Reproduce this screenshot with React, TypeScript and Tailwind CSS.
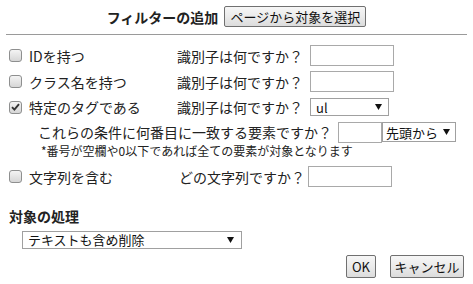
import React from 'react';

const font = { fontFamily: '"Noto Sans CJK JP", "Noto Sans", sans-serif' };

const Check: React.FC<{ checked?: boolean }> = ({ checked }) => (
  <span className="w-[13px] h-[13px] rounded-[3px] border border-[#8e8f8f] bg-gradient-to-b from-[#f4f4f4] to-[#d6d6d6] flex items-center justify-center shrink-0">
    {checked && (
      <svg width="9" height="8" viewBox="0 0 9 8">
        <path d="M1 4.2 L3.4 6.6 L8 1.2" fill="none" stroke="#333" strokeWidth="1.9" />
      </svg>
    )}
  </span>
);

const Arrow = () => (
  <svg width="7" height="6" viewBox="0 0 7 6" className="shrink-0">
    <polygon points="0,0 7,0 3.5,6" fill="#111" />
  </svg>
);

const Input: React.FC<{ w: string }> = ({ w }) => (
  <div className={`${w} h-[21px] border border-[#a9a9a9] bg-white shrink-0`} />
);

const Btn: React.FC<{ label: string; cls: string }> = ({ label, cls }) => (
  <button className={`${cls} border border-[#707070] rounded-[2px] bg-gradient-to-b from-[#f6f6f6] via-[#ebebeb] to-[#dcdcdc] text-[13px] leading-none text-[#111] flex items-center justify-center`}>
    {label}
  </button>
);

export default function App() {
  return (
    <div className="w-[473px] h-[284px] bg-white text-[#222] overflow-hidden" style={font}>
      {/* header */}
      <div className="flex items-center justify-center gap-[6px] pt-[6px] h-[27px]">
        <span className="text-[14px] font-bold leading-none">フィルターの追加</span>
        <Btn label="ページから対象を選択" cls="w-[142px] h-[21px]" />
      </div>
      <div className="mx-[6px] mt-[7px] border-t border-[#9a9a9a]" />

      {/* filters */}
      <div className="mt-[10px] text-[14px] leading-none">
        <div className="flex items-center h-[21px]">
          <div className="w-[177px] pl-[9px] flex items-center gap-[7px]">
            <Check />
            <span>IDを持つ</span>
          </div>
          <span className="w-[133px]">識別子は何ですか？</span>
          <Input w="w-[84px]" />
        </div>

        <div className="flex items-center h-[21px] mt-[5px]">
          <div className="w-[177px] pl-[9px] flex items-center gap-[7px]">
            <Check />
            <span>クラス名を持つ</span>
          </div>
          <span className="w-[133px]">識別子は何ですか？</span>
          <Input w="w-[84px]" />
        </div>

        <div className="flex items-center h-[20px] mt-[5px]">
          <div className="w-[177px] pl-[9px] flex items-center gap-[7px]">
            <Check checked />
            <span>特定のタグである</span>
          </div>
          <span className="w-[133px]">識別子は何ですか？</span>
          <div className="w-[79px] h-[18px] border border-[#a0a0a0] bg-white flex items-center justify-between pl-[5px] pr-[6px] text-[13px] text-[#111]">
            <span>ul</span>
            <Arrow />
          </div>
        </div>

        <div className="flex items-center h-[20px] mt-[5px] pl-[38px]">
          <span className="w-[300px]">これらの条件に何番目に一致する要素ですか？</span>
          <Input w="w-[44px] h-[20px]" />
          <div className="w-[74px] h-[20px] border border-[#a0a0a0] bg-white flex items-center justify-between pl-[3px] pr-[5px] text-[13px] text-[#111]">
            <span>先頭から</span>
            <Arrow />
          </div>
        </div>

        <div className="h-[16px] mt-[1px] pl-[41px] flex items-center text-[12px]">
          *番号が空欄や0以下であれば全ての要素が対象となります
        </div>

        <div className="flex items-center h-[21px] mt-[7px]">
          <div className="w-[179px] pl-[9px] flex items-center gap-[7px]">
            <Check />
            <span>文字列を含む</span>
          </div>
          <span className="w-[129px]">どの文字列ですか？</span>
          <Input w="w-[84px]" />
        </div>
      </div>

      {/* action */}
      <div className="mt-[22px] pl-[9px] text-[14px] font-bold leading-none">対象の処理</div>
      <div className="ml-[22px] mt-[8px] w-[220px] h-[18px] border border-[#a0a0a0] bg-white flex items-center justify-between pl-[5px] pr-[7px] text-[13px] text-[#111]">
        <span>テキストも含め削除</span>
        <Arrow />
      </div>

      <div className="flex justify-end gap-[14px] pr-[9px] mt-[6px]">
        <Btn label="OK" cls="w-[30px] h-[23px]" />
        <Btn label="キャンセル" cls="w-[74px] h-[23px]" />
      </div>
    </div>
  );
}
